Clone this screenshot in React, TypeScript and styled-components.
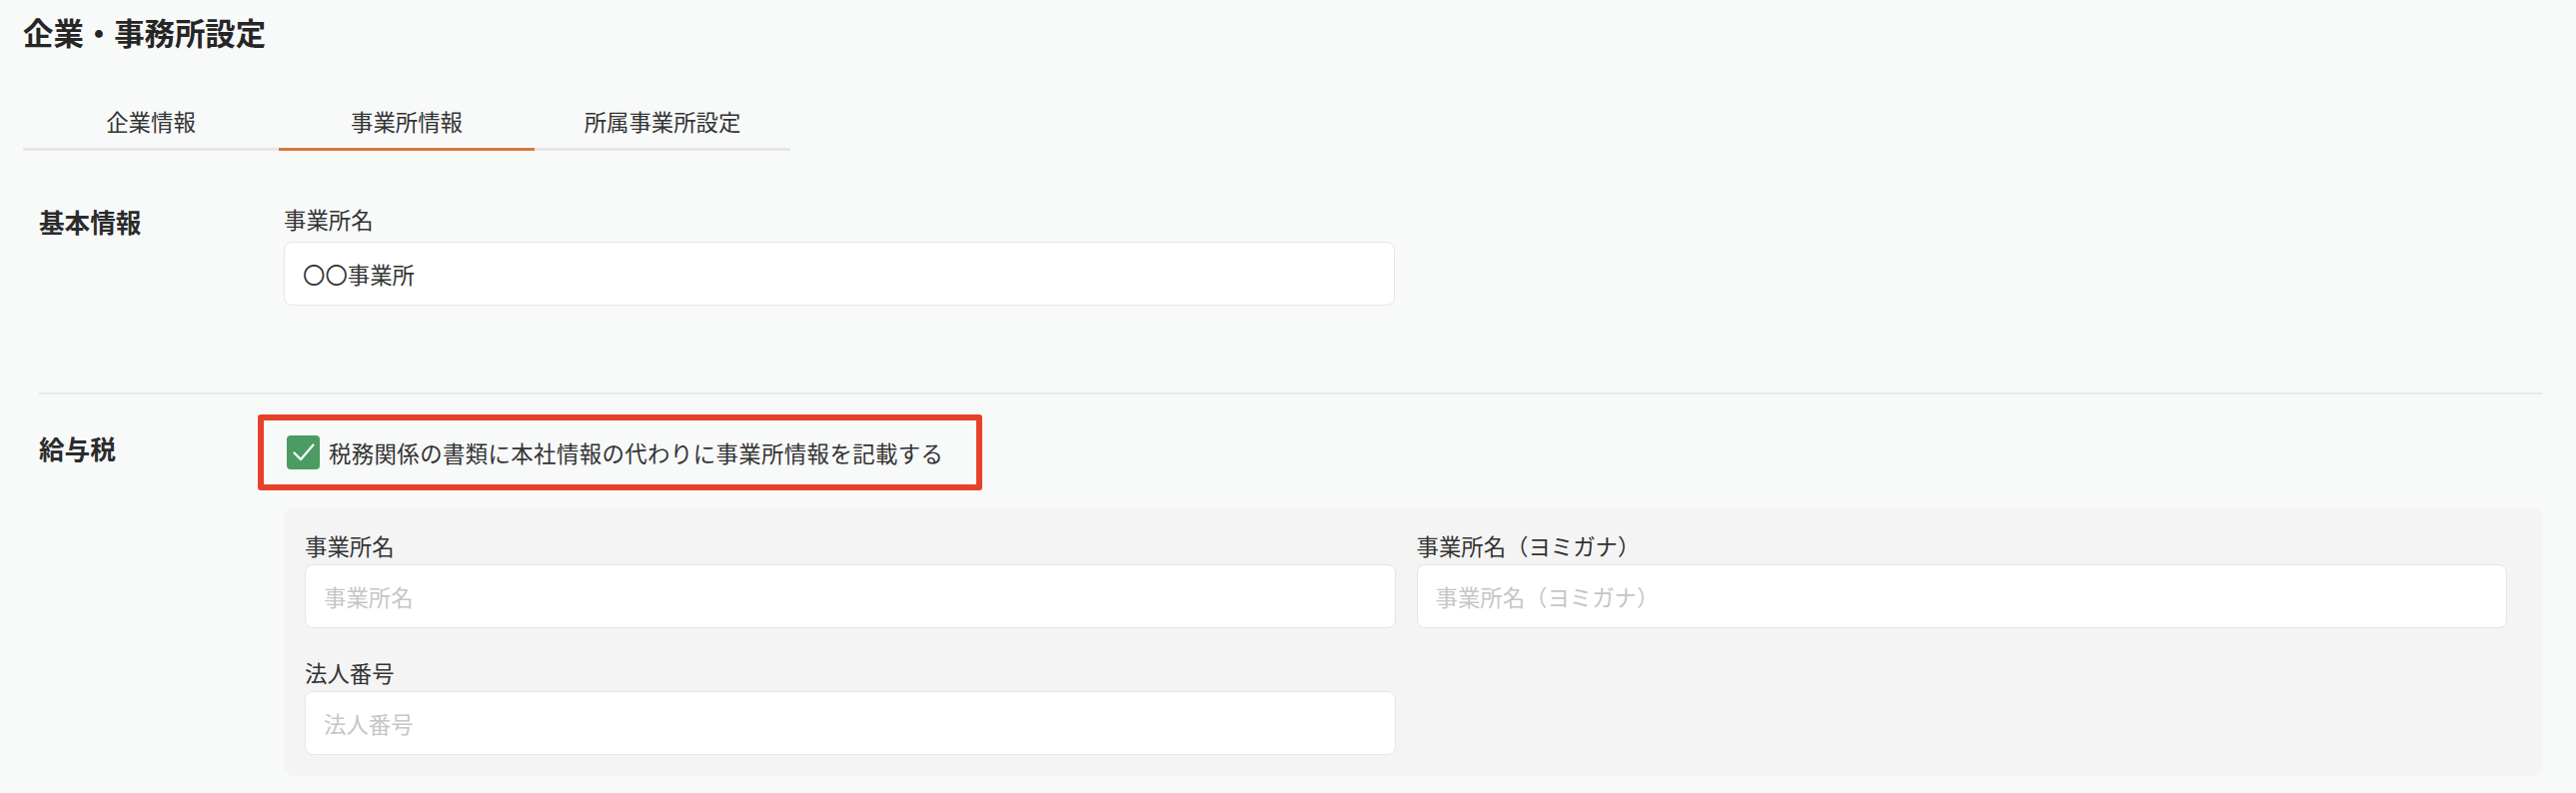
import React from 'react';
import styled, { createGlobalStyle } from 'styled-components';

const GlobalStyle = createGlobalStyle`
  html, body {
    margin: 0;
    padding: 0;
    background: #f8f9f9;
  }
  body {
    font-family: "Noto Sans CJK JP", "Noto Sans", sans-serif;
    color: #333;
  }
  * {
    box-sizing: border-box;
  }
`;

const Page = styled.div`
  padding: 10px 33px 20px 23px;
  min-height: 794px;
`;

const Title = styled.h1`
  margin: 0;
  font-size: 30.4px;
  line-height: 45px;
  font-weight: 700;
  color: #262626;
`;

const Tabs = styled.div`
  display: flex;
  margin-top: 40px;
`;

const Tab = styled.div<{ active?: boolean }>`
  width: 256px;
  padding: 10px 0 10px;
  text-align: center;
  font-size: 22.4px;
  line-height: 33px;
  color: #333;
  border-bottom: 3px solid ${(props) => (props.active ? '#d9783a' : '#e7e7eb')};
`;

const Content = styled.div`
  padding-left: 16px;
`;

const Section = styled.section<{ divider?: boolean }>`
  display: grid;
  grid-template-columns: 245px 1fr;
  padding: ${(props) => (props.divider ? '20px 0 0' : '52px 0 87px')};
  border-top: ${(props) => (props.divider ? '2px solid #e8e9e9' : 'none')};
`;

const SectionLabel = styled.h2<{ offset?: number }>`
  margin: ${(props) => props.offset || 0}px 0 0;
  font-size: 25.6px;
  line-height: 38px;
  font-weight: 700;
  color: #2b2b2b;
`;

const Field = styled.div<{ width?: string }>`
  display: flex;
  flex-direction: column;
  width: ${(props) => props.width || 'auto'};
`;

const FieldLabel = styled.label<{ gap?: number }>`
  font-size: 22.4px;
  line-height: 33px;
  margin-bottom: ${(props) => props.gap ?? 2}px;
  color: #333;
`;

const Input = styled.input`
  height: 64px;
  padding: 0 18px;
  border: 1px solid #e6e6e6;
  border-radius: 8px;
  background: #fff;
  font-family: "Noto Sans CJK JP", "Noto Sans", sans-serif;
  font-size: 22.4px;
  color: #333;
  outline: none;

  &::placeholder {
    color: #c6c6c6;
  }
`;

const Highlight = styled.div`
  display: inline-flex;
  align-items: center;
  align-self: flex-start;
  margin-left: -26px;
  padding: 15px 33px 15px 23px;
  border: 6px solid #e8412b;
  border-radius: 3px;
`;

const CheckRow = styled.label`
  display: flex;
  align-items: center;
  gap: 9px;
  font-size: 22.4px;
  line-height: 33px;
  letter-spacing: 0.4px;
  color: #333;
`;

const CheckBox = styled.span`
  display: flex;
  align-items: center;
  justify-content: center;
  width: 33px;
  height: 34px;
  border-radius: 4px;
  background: #4a9c63;
`;

const Column = styled.div`
  display: flex;
  flex-direction: column;
`;

const Panel = styled.div`
  display: grid;
  grid-template-columns: 1fr 1fr;
  column-gap: 21px;
  row-gap: 28px;
  margin-top: 18px;
  padding: 21px 36px 21px 21px;
  border-radius: 10px;
  background: #f4f4f4;
`;

const App = () => (
  <>
    <GlobalStyle />
    <Page>
      <Title>企業・事務所設定</Title>
      <Tabs>
        <Tab>企業情報</Tab>
        <Tab active>事業所情報</Tab>
        <Tab>所属事業所設定</Tab>
      </Tabs>
      <Content>
        <Section>
          <SectionLabel>基本情報</SectionLabel>
          <Field width="1112px">
            <FieldLabel gap={6}>事業所名</FieldLabel>
            <Input defaultValue="〇〇事業所" />
          </Field>
        </Section>
        <Section divider>
          <SectionLabel offset={15}>給与税</SectionLabel>
          <Column>
            <Highlight>
              <CheckRow>
                <CheckBox>
                  <svg width="22" height="18" viewBox="0 0 22 18" fill="none">
                    <path
                      d="M1.5 9.5 L8 16 L20.5 1.5"
                      stroke="#fff"
                      strokeWidth="2.2"
                      strokeLinecap="round"
                      strokeLinejoin="round"
                    />
                  </svg>
                </CheckBox>
                税務関係の書類に本社情報の代わりに事業所情報を記載する
              </CheckRow>
            </Highlight>
            <Panel>
              <Field>
                <FieldLabel>事業所名</FieldLabel>
                <Input placeholder="事業所名" />
              </Field>
              <Field>
                <FieldLabel>事業所名（ヨミガナ）</FieldLabel>
                <Input placeholder="事業所名（ヨミガナ）" />
              </Field>
              <Field>
                <FieldLabel>法人番号</FieldLabel>
                <Input placeholder="法人番号" />
              </Field>
            </Panel>
          </Column>
        </Section>
      </Content>
    </Page>
  </>
);

export default App;
